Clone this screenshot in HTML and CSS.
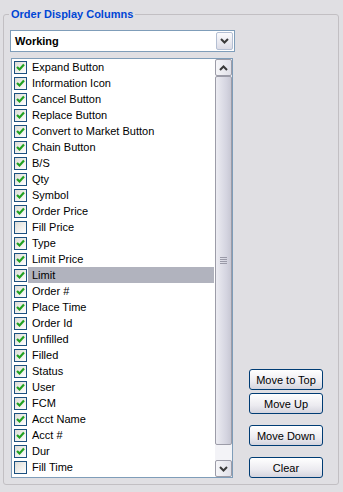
FILE: index.html
```html
<!DOCTYPE html>
<html>
<head>
<meta charset="utf-8">
<link rel="stylesheet" href="styles.css">
</head>
<body>
<fieldset class="group">
  <legend class="group-title">Order Display Columns</legend>
  <div class="select">
    <span class="select-value">Working</span>
    <span class="select-btn"><svg width="9" height="6" viewBox="0 0 9 6"><polyline points="1,1 4.5,4.5 8,1" fill="none" stroke="#3a3a3a" stroke-width="2"/></svg></span>
  </div>
  <div class="main">
    <div class="listbox">
      <ul class="items">
        <li class="item"><span class="cb checked"><svg width="11" height="11" viewBox="0 0 11 11"><polyline points="2,5 4.5,7.5 9,2.5" fill="none" stroke="#21a121" stroke-width="2.2"/></svg></span><span class="label">Expand Button</span></li>
        <li class="item"><span class="cb checked"><svg width="11" height="11" viewBox="0 0 11 11"><polyline points="2,5 4.5,7.5 9,2.5" fill="none" stroke="#21a121" stroke-width="2.2"/></svg></span><span class="label">Information Icon</span></li>
        <li class="item"><span class="cb checked"><svg width="11" height="11" viewBox="0 0 11 11"><polyline points="2,5 4.5,7.5 9,2.5" fill="none" stroke="#21a121" stroke-width="2.2"/></svg></span><span class="label">Cancel Button</span></li>
        <li class="item"><span class="cb checked"><svg width="11" height="11" viewBox="0 0 11 11"><polyline points="2,5 4.5,7.5 9,2.5" fill="none" stroke="#21a121" stroke-width="2.2"/></svg></span><span class="label">Replace Button</span></li>
        <li class="item"><span class="cb checked"><svg width="11" height="11" viewBox="0 0 11 11"><polyline points="2,5 4.5,7.5 9,2.5" fill="none" stroke="#21a121" stroke-width="2.2"/></svg></span><span class="label">Convert to Market Button</span></li>
        <li class="item"><span class="cb checked"><svg width="11" height="11" viewBox="0 0 11 11"><polyline points="2,5 4.5,7.5 9,2.5" fill="none" stroke="#21a121" stroke-width="2.2"/></svg></span><span class="label">Chain Button</span></li>
        <li class="item"><span class="cb checked"><svg width="11" height="11" viewBox="0 0 11 11"><polyline points="2,5 4.5,7.5 9,2.5" fill="none" stroke="#21a121" stroke-width="2.2"/></svg></span><span class="label">B/S</span></li>
        <li class="item"><span class="cb checked"><svg width="11" height="11" viewBox="0 0 11 11"><polyline points="2,5 4.5,7.5 9,2.5" fill="none" stroke="#21a121" stroke-width="2.2"/></svg></span><span class="label">Qty</span></li>
        <li class="item"><span class="cb checked"><svg width="11" height="11" viewBox="0 0 11 11"><polyline points="2,5 4.5,7.5 9,2.5" fill="none" stroke="#21a121" stroke-width="2.2"/></svg></span><span class="label">Symbol</span></li>
        <li class="item"><span class="cb checked"><svg width="11" height="11" viewBox="0 0 11 11"><polyline points="2,5 4.5,7.5 9,2.5" fill="none" stroke="#21a121" stroke-width="2.2"/></svg></span><span class="label">Order Price</span></li>
        <li class="item"><span class="cb"></span><span class="label">Fill Price</span></li>
        <li class="item"><span class="cb checked"><svg width="11" height="11" viewBox="0 0 11 11"><polyline points="2,5 4.5,7.5 9,2.5" fill="none" stroke="#21a121" stroke-width="2.2"/></svg></span><span class="label">Type</span></li>
        <li class="item"><span class="cb checked"><svg width="11" height="11" viewBox="0 0 11 11"><polyline points="2,5 4.5,7.5 9,2.5" fill="none" stroke="#21a121" stroke-width="2.2"/></svg></span><span class="label">Limit Price</span></li>
        <li class="item is-selected"><span class="cb checked"><svg width="11" height="11" viewBox="0 0 11 11"><polyline points="2,5 4.5,7.5 9,2.5" fill="none" stroke="#21a121" stroke-width="2.2"/></svg></span><span class="label">Limit</span></li>
        <li class="item"><span class="cb checked"><svg width="11" height="11" viewBox="0 0 11 11"><polyline points="2,5 4.5,7.5 9,2.5" fill="none" stroke="#21a121" stroke-width="2.2"/></svg></span><span class="label">Order #</span></li>
        <li class="item"><span class="cb checked"><svg width="11" height="11" viewBox="0 0 11 11"><polyline points="2,5 4.5,7.5 9,2.5" fill="none" stroke="#21a121" stroke-width="2.2"/></svg></span><span class="label">Place Time</span></li>
        <li class="item"><span class="cb checked"><svg width="11" height="11" viewBox="0 0 11 11"><polyline points="2,5 4.5,7.5 9,2.5" fill="none" stroke="#21a121" stroke-width="2.2"/></svg></span><span class="label">Order Id</span></li>
        <li class="item"><span class="cb checked"><svg width="11" height="11" viewBox="0 0 11 11"><polyline points="2,5 4.5,7.5 9,2.5" fill="none" stroke="#21a121" stroke-width="2.2"/></svg></span><span class="label">Unfilled</span></li>
        <li class="item"><span class="cb checked"><svg width="11" height="11" viewBox="0 0 11 11"><polyline points="2,5 4.5,7.5 9,2.5" fill="none" stroke="#21a121" stroke-width="2.2"/></svg></span><span class="label">Filled</span></li>
        <li class="item"><span class="cb checked"><svg width="11" height="11" viewBox="0 0 11 11"><polyline points="2,5 4.5,7.5 9,2.5" fill="none" stroke="#21a121" stroke-width="2.2"/></svg></span><span class="label">Status</span></li>
        <li class="item"><span class="cb checked"><svg width="11" height="11" viewBox="0 0 11 11"><polyline points="2,5 4.5,7.5 9,2.5" fill="none" stroke="#21a121" stroke-width="2.2"/></svg></span><span class="label">User</span></li>
        <li class="item"><span class="cb checked"><svg width="11" height="11" viewBox="0 0 11 11"><polyline points="2,5 4.5,7.5 9,2.5" fill="none" stroke="#21a121" stroke-width="2.2"/></svg></span><span class="label">FCM</span></li>
        <li class="item"><span class="cb checked"><svg width="11" height="11" viewBox="0 0 11 11"><polyline points="2,5 4.5,7.5 9,2.5" fill="none" stroke="#21a121" stroke-width="2.2"/></svg></span><span class="label">Acct Name</span></li>
        <li class="item"><span class="cb checked"><svg width="11" height="11" viewBox="0 0 11 11"><polyline points="2,5 4.5,7.5 9,2.5" fill="none" stroke="#21a121" stroke-width="2.2"/></svg></span><span class="label">Acct #</span></li>
        <li class="item"><span class="cb checked"><svg width="11" height="11" viewBox="0 0 11 11"><polyline points="2,5 4.5,7.5 9,2.5" fill="none" stroke="#21a121" stroke-width="2.2"/></svg></span><span class="label">Dur</span></li>
        <li class="item"><span class="cb"></span><span class="label">Fill Time</span></li>
      </ul>
      <div class="vscroll">
        <div class="sb-btn"><svg width="9" height="6" viewBox="0 0 9 6"><polyline points="1,5 4.5,1.5 8,5" fill="none" stroke="#3a3a3a" stroke-width="2"/></svg></div>
        <div class="sb-track">
          <div class="sb-thumb"><span class="grip"></span></div>
        </div>
        <div class="sb-btn"><svg width="9" height="6" viewBox="0 0 9 6"><polyline points="1,1 4.5,4.5 8,1" fill="none" stroke="#3a3a3a" stroke-width="2"/></svg></div>
      </div>
    </div>
    <div class="actions">
      <button class="btn">Move to Top</button>
      <button class="btn">Move Up</button>
      <button class="btn btn-spaced">Move Down</button>
      <button class="btn btn-spaced">Clear</button>
    </div>
  </div>
</fieldset>
</body>
</html>
```

FILE: styles.css
```css
html, body {
  margin: 0;
  padding: 0;
}
body {
  background: #e0dfe3;
  font-family: "Liberation Sans", Arial, sans-serif;
  font-size: 11px;
  color: #000;
  padding-top: 7px;
  height: 492px;
  box-sizing: border-box;
}
.group {
  margin: 0 4px 0 3px;
  padding: 9px 15px 6px 6px;
  border: 1px solid #c2bfc3;
  border-radius: 3px;
  min-width: 0;
}
.group-title {
  padding: 0 2px;
  margin-left: -1px;
  color: #0046d5;
  font-weight: bold;
  font-size: 11px;
  line-height: 14px;
}
.select {
  display: flex;
  align-items: stretch;
  height: 22px;
  width: 225px;
  box-sizing: border-box;
  border: 1px solid #7f9db9;
  background: #fff;
  padding: 1px;
}
.select-value {
  flex: 1;
  font-weight: bold;
  padding-left: 3px;
  line-height: 19px;
}
.select-btn {
  width: 15px;
  border: 1px solid #b4bfd3;
  border-radius: 2px;
  background: linear-gradient(#fbfbfd, #dcdce6);
  display: flex;
  align-items: center;
  justify-content: center;
}
.main {
  display: flex;
  align-items: flex-end;
  gap: 16px;
  margin-top: 6px;
  margin-left: 1px;
}
.listbox {
  display: flex;
  width: 222px;
  height: 420px;
  box-sizing: border-box;
  border: 1px solid #7f9db9;
  background: #fff;
}
.items {
  list-style: none;
  margin: 0;
  padding: 0;
  flex: 1;
  min-width: 0;
  overflow: hidden;
}
.item {
  display: flex;
  align-items: center;
  height: 16px;
  padding-left: 2px;
  white-space: nowrap;
}
.cb {
  width: 13px;
  height: 13px;
  box-sizing: border-box;
  border: 1px solid #1c5180;
  background: linear-gradient(135deg, #dcdcd7, #ffffff);
  display: flex;
  align-items: center;
  justify-content: center;
  flex: none;
}
.label {
  flex: 1;
  margin-left: 1px;
  margin-right: 1px;
  padding-left: 4px;
  line-height: 16px;
}
.is-selected .label {
  background: #b1b3be;
}
.vscroll {
  width: 17px;
  display: flex;
  flex-direction: column;
  background: #f3f3f7;
  flex: none;
}
.sb-btn {
  height: 17px;
  box-sizing: border-box;
  border: 1px solid #9c9ca8;
  border-radius: 2px;
  background: linear-gradient(90deg, #f6f6f9, #e0e0e8);
  display: flex;
  align-items: center;
  justify-content: center;
  flex: none;
}
.sb-track {
  flex: 1;
  display: flex;
  flex-direction: column;
  padding-bottom: 15px;
}
.sb-thumb {
  flex: 1;
  border: 1px solid #9c9ca8;
  border-radius: 2px;
  background: linear-gradient(90deg, #ececf2, #d4d4e0 70%, #c8c8d4);
  display: flex;
  align-items: center;
  justify-content: center;
}
.grip {
  width: 7px;
  height: 7px;
  background: repeating-linear-gradient(#9a9aa8 0 1px, transparent 1px 2px);
}
.actions {
  display: flex;
  flex-direction: column;
  gap: 3px;
}
.btn {
  width: 74px;
  height: 21px;
  box-sizing: border-box;
  border: 1px solid #003c74;
  border-radius: 3px;
  background: linear-gradient(#ffffff, #ecebf0 60%, #d4d4de);
  font-family: "Liberation Sans", Arial, sans-serif;
  font-size: 11px;
  color: #000;
  padding: 0;
}
.btn-spaced {
  margin-top: 8px;
}
```
